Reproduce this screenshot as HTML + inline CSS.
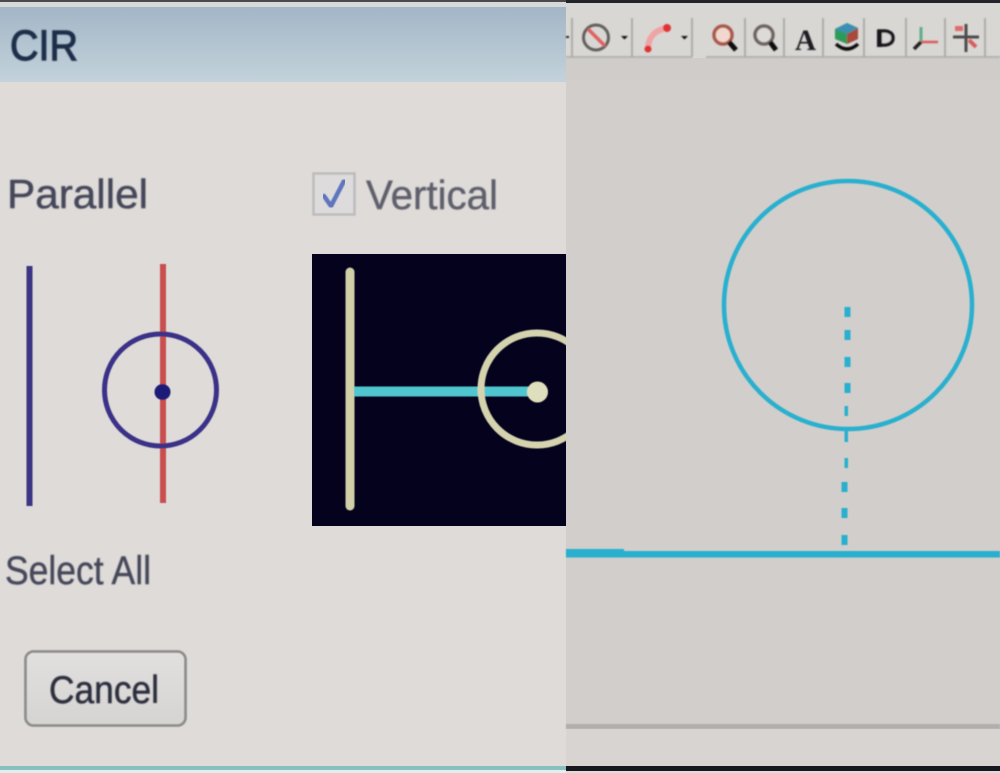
<!DOCTYPE html>
<html>
<head>
<meta charset="utf-8">
<style>
html,body{margin:0;padding:0;background:#dcd9d6;}
body{width:1000px;height:773px;overflow:hidden;position:relative;font-family:"Liberation Sans",sans-serif;}
svg{position:absolute;left:0;top:0;}
text{font-family:"Liberation Sans",sans-serif;}
</style>
</head>
<body>
<svg width="1000" height="773" viewBox="0 0 1000 773" xmlns="http://www.w3.org/2000/svg">
<defs>
<linearGradient id="tb" x1="0" y1="0" x2="0" y2="1">
<stop offset="0" stop-color="#a3b5c6"/>
<stop offset="0.55" stop-color="#b5c6d2"/>
<stop offset="1" stop-color="#c3d2da"/>
</linearGradient>
<linearGradient id="btn" x1="0" y1="0" x2="0" y2="1">
<stop offset="0" stop-color="#e2e0de"/>
<stop offset="1" stop-color="#d6d4d2"/>
</linearGradient>
<filter id="b1" x="-5%" y="-5%" width="110%" height="110%"><feGaussianBlur stdDeviation="0.8"/></filter>
<filter id="b2" x="-5%" y="-5%" width="110%" height="110%"><feGaussianBlur stdDeviation="0.55"/></filter>
<filter id="bt" x="-5%" y="-10%" width="110%" height="120%"><feGaussianBlur stdDeviation="0.9"/></filter>
</defs>

<!-- left panel -->
<rect x="0" y="0" width="566" height="773" fill="#dedbd8"/>
<rect x="0" y="0" width="566" height="2" fill="#4a4a4c"/>
<rect x="0" y="2" width="566" height="5" fill="#d6d8dc"/>
<rect x="0" y="7" width="566" height="75" fill="url(#tb)"/>
<rect x="0" y="82" width="566" height="4" fill="#e0dbd6"/>
<text x="10" y="60" font-size="43" fill="#1f2f4a" stroke="#1f2f4a" stroke-width="1.200" filter="url(#bt)" textLength="68" lengthAdjust="spacingAndGlyphs">CIR</text>

<text x="7" y="208" font-size="41" fill="#45475a" stroke="#45475a" stroke-width="0.500" filter="url(#bt)" textLength="141" lengthAdjust="spacingAndGlyphs">Parallel</text>

<rect x="313.500" y="173.500" width="41" height="41" fill="#dddbdb" stroke="#bdbcbc" stroke-width="2.500" filter="url(#b2)"/>
<path d="M324 196 L331 206 L344 181" fill="none" stroke="#5f74bd" stroke-width="4.500" stroke-linecap="round" stroke-linejoin="round" filter="url(#b2)"/>
<text x="366" y="209" font-size="41" fill="#5e5f6c" stroke="#5e5f6c" stroke-width="0.400" filter="url(#bt)" textLength="132" lengthAdjust="spacingAndGlyphs">Vertical</text>

<!-- parallel glyph -->
<g filter="url(#b2)">
<line x1="29.500" y1="266" x2="29.500" y2="506" stroke="#3a3585" stroke-width="6"/>
<line x1="163" y1="264" x2="163" y2="503" stroke="#c9504f" stroke-width="6"/>
<circle cx="160.500" cy="390" r="56" fill="none" stroke="#3a3288" stroke-width="5"/>
<circle cx="162.500" cy="392" r="8" fill="#1e1a78"/>
</g>

<!-- black preview -->
<svg x="312" y="254" width="254" height="272" viewBox="312 254 254 272">
<rect x="312" y="254" width="254" height="272" fill="#04021c"/>
<g filter="url(#b2)">
<line x1="350" y1="272" x2="350" y2="506" stroke="#d0cfa8" stroke-width="9" stroke-linecap="round"/>
<line x1="354" y1="391.500" x2="537" y2="391.500" stroke="#4fc5cf" stroke-width="10"/>
<circle cx="537" cy="389" r="56" fill="none" stroke="#d4d3ae" stroke-width="7"/>
<circle cx="537.500" cy="392" r="10.500" fill="#e0dfbd"/>
</g>
</svg>

<text x="5" y="584" font-size="40" fill="#45475a" stroke="#45475a" stroke-width="0.400" filter="url(#bt)" textLength="146" lengthAdjust="spacingAndGlyphs">Select All</text>

<!-- Cancel -->
<rect x="25.500" y="651.500" width="160" height="74" rx="8" fill="url(#btn)" stroke="#8f8f8f" stroke-width="2.800" filter="url(#b2)"/>
<text x="49" y="703" font-size="39" fill="#2c2e3c" stroke="#2c2e3c" stroke-width="0.500" filter="url(#bt)" textLength="110" lengthAdjust="spacingAndGlyphs">Cancel</text>

<rect x="0" y="766" width="566" height="4" fill="#88bfc0"/>
<rect x="0" y="770" width="566" height="3" fill="#e0efec"/>

<!-- right panel -->
<rect x="566" y="0" width="434" height="773" fill="#d0cdcb"/>
<rect x="566" y="0" width="434" height="3" fill="#23232b"/>
<rect x="566" y="3" width="434" height="55" fill="#d9d7d4"/>
<rect x="566" y="58" width="434" height="22" fill="#cfccca"/>
<rect x="566" y="80" width="434" height="641" fill="#d1cecc"/>
<rect x="566" y="724" width="434" height="5" fill="#b1afad" filter="url(#b2)"/>
<rect x="566" y="729" width="434" height="37" fill="#d8d4d1"/>
<rect x="566" y="766" width="434" height="5" fill="#17171f"/>
<rect x="566" y="771" width="434" height="2" fill="#dedcda"/>

<!-- toolbar -->
<g filter="url(#b1)">
<rect x="566" y="56" width="126" height="2" fill="#b3b1af"/>
<rect x="706" y="56" width="294" height="2" fill="#b3b1af"/>
<g fill="#aeaca9">
<rect x="571" y="18" width="2" height="39"/><rect x="631" y="18" width="2" height="39"/><rect x="691" y="18" width="2" height="39"/>
<rect x="744" y="18" width="2" height="39"/><rect x="783" y="18" width="2" height="39"/><rect x="822" y="18" width="2" height="39"/>
<rect x="863" y="18" width="2" height="39"/><rect x="905" y="18" width="2" height="39"/><rect x="944" y="18" width="2" height="39"/>
<rect x="984" y="18" width="2" height="39"/>
</g>
<rect x="566" y="36" width="3" height="2" fill="#222"/>
<circle cx="596" cy="37.500" r="12.500" fill="none" stroke="#625e5c" stroke-width="3"/>
<line x1="588" y1="29" x2="605" y2="46" stroke="#e06060" stroke-width="3.500"/>
<path d="M621 36 h7 l-3.500 3.500z" fill="#111"/>
<path d="M648 49 C648 37 655 30 667 28" fill="none" stroke="#efa4a4" stroke-width="6"/>
<circle cx="648" cy="49" r="3.500" fill="#e03030"/><circle cx="667" cy="28" r="4" fill="#e03030"/>
<path d="M681 36 h7 l-3.500 3.500z" fill="#111"/>
<circle cx="723" cy="35" r="9" fill="#f2d8cc" stroke="#a8584c" stroke-width="3.500"/>
<line x1="729" y1="42" x2="736" y2="50" stroke="#0c0c0c" stroke-width="5"/>
<circle cx="764" cy="35" r="9" fill="#dddbd8" stroke="#6e6562" stroke-width="3.500"/>
<line x1="770" y1="42" x2="776" y2="50" stroke="#0c0c0c" stroke-width="5"/>
<text x="795" y="50" font-size="30" font-weight="700" fill="#1a1a24" font-family="Liberation Serif" style="font-family:'Liberation Serif',serif" textLength="21" lengthAdjust="spacingAndGlyphs">A</text>
<path d="M835 29 l12 -6 l11 5 v11 l-11 5 l-12 -5z" fill="#2f9a5a"/>
<path d="M847 34 l11 -6 v11 l-11 5z" fill="#a8483c"/>
<path d="M835 29 l12 -6 l11 5 l-11 6z" fill="#3a8fb0"/>
<path d="M836 44 q11 10 22 0" fill="none" stroke="#111" stroke-width="3.500"/>
<path d="M879 31 h6 q8 1 8 7 t-8 7 h-6z" fill="#d9d7d4" stroke="#14141c" stroke-width="3.500"/>
<rect x="877" y="30" width="5" height="17" fill="#14141c"/>
<line x1="921" y1="27" x2="921" y2="42" stroke="#5caf86" stroke-width="3"/>
<line x1="921" y1="42" x2="938" y2="42" stroke="#d85c5c" stroke-width="2.500"/>
<line x1="921" y1="42" x2="914" y2="49" stroke="#222" stroke-width="3.500"/>
<line x1="953" y1="37" x2="979" y2="37" stroke="#4c4c4c" stroke-width="3"/>
<line x1="966" y1="24" x2="966" y2="52" stroke="#4c4c4c" stroke-width="3"/>
<rect x="955" y="26" width="8" height="5" fill="#e06a6a"/>
<line x1="969" y1="40" x2="976" y2="47" stroke="#d85c5c" stroke-width="4"/>
</g>

<!-- drawing -->
<g filter="url(#b2)">
<circle cx="848" cy="305" r="124" fill="none" stroke="#2bb0cf" stroke-width="4.500"/>
<g fill="#2bb0cf">
<rect x="844.500" y="307" width="6" height="10"/>
<rect x="844.500" y="330" width="6" height="10"/>
<rect x="844.500" y="357" width="6" height="10"/>
<rect x="844.500" y="383" width="6" height="10"/>
<rect x="844.500" y="406" width="3.500" height="10"/>
<rect x="844.500" y="431" width="3.500" height="11"/>
<rect x="844.500" y="458" width="3.500" height="10"/>
<rect x="841.500" y="482" width="6" height="10"/>
<rect x="841.500" y="508" width="6" height="10"/>
<rect x="841.500" y="535" width="6" height="10"/>
<rect x="566" y="549" width="58" height="5"/>
<rect x="566" y="551" width="434" height="6.500"/>
</g>
</g>
</svg>
</body>
</html>
